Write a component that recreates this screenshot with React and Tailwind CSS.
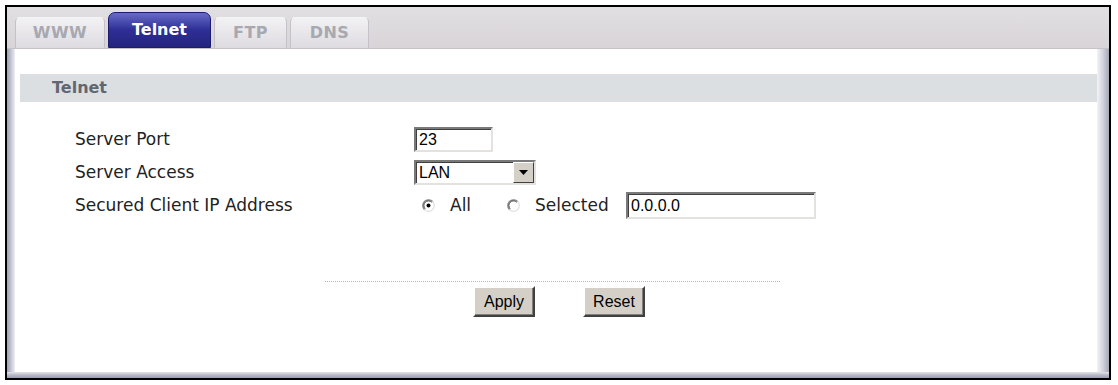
import React from "react";

const Tab = ({ label, active, w }) =>
  active ? (
    <div
      className={`h-[36px] rounded-t-[7px] border border-[#1c1c6e] bg-gradient-to-b from-[#6a6ac8] via-[#2e2e96] to-[#24247e] flex items-center justify-center text-white font-bold text-[16px] ${w}`}
      style={{ fontFamily: '"DejaVu Sans", Verdana, sans-serif' }}
    >
      {label}
    </div>
  ) : (
    <div
      className={`h-[31px] rounded-t-[5px] border border-b-0 border-[#c4c2c8] border-t-[#f4f4f6] bg-gradient-to-b from-[#f2f1f3] to-[#dddbe0] flex items-center justify-center text-[#a8a8b0] font-bold text-[16px] tracking-[0.5px] ${w}`}
      style={{ fontFamily: '"DejaVu Sans", Verdana, sans-serif' }}
    >
      {label}
    </div>
  );

const Radio = ({ checked }) => (
  <svg width="13" height="13" viewBox="0 0 13 13" className="shrink-0">
    <circle cx="6.5" cy="6.5" r="5.8" fill="#ffffff" stroke="#e0e0e0" strokeWidth="1.2" />
    <path d="M2.4 10.6 A5.8 5.8 0 0 1 10.6 2.4" fill="none" stroke="#8a8a8a" strokeWidth="1.3" />
    <path d="M3.2 9.8 A4.6 4.6 0 0 1 9.8 3.2" fill="none" stroke="#404040" strokeWidth="1" />
    {checked && <circle cx="6.5" cy="6.5" r="2" fill="#000000" />}
  </svg>
);

const inputCls =
  "bg-white border-2 border-t-[#7a7a7a] border-l-[#7a7a7a] border-b-[#e4e2de] border-r-[#e4e2de] shadow-[inset_1px_1px_0_#404040] text-[16px] text-black flex items-center pl-[3px]";

const arial = { fontFamily: '"Liberation Sans", Arial, sans-serif' };
const label = { fontFamily: '"DejaVu Sans", Verdana, sans-serif' };

const Button = ({ children, w }) => (
  <div
    className={`h-[31px] ${w} bg-[#d4d0c8] border-2 border-t-[#ffffff] border-l-[#ffffff] border-b-[#404040] border-r-[#404040] shadow-[inset_-1px_-1px_0_#808080] flex items-center justify-center text-[16px] text-black`}
    style={arial}
  >
    {children}
  </div>
);

export default function App() {
  return (
    <div className="w-[1118px] h-[385px] bg-white pt-[5px] pl-[5px]">
      <div className="w-[1106px] h-[375px] border-2 border-black flex flex-col">
        {/* tab strip */}
        <div className="h-[42px] shrink-0 bg-gradient-to-b from-[#e2dfe2] to-[#d8d4d8] border-b border-[#c6c2c6] flex items-end pl-[8px] gap-[3px]">
          <Tab label="WWW" w="w-[90px]" />
          <Tab label="Telnet" active w="w-[103px]" />
          <Tab label="FTP" w="w-[73px]" />
          <Tab label="DNS" w="w-[79px]" />
        </div>
        {/* body */}
        <div className="flex-1 flex flex-col">
          <div className="flex-1 flex">
            <div className="w-[8px] bg-gradient-to-r from-[#9ea2b4] via-[#c4c6d2] to-[#eeeef2]" />
            <div className="flex-1 bg-white flex flex-col pt-[25px]">
              <div
                className="ml-[5px] h-[28px] bg-[#dcdfe2] flex items-center pl-[32px] text-[16px] font-bold text-[#62666f]"
                style={label}
              >
                Telnet
              </div>
              <div className="mt-[21px] pl-[60px] flex flex-col text-[17px] text-[#222222]" style={label}>
                <div className="h-[33px] flex items-center">
                  <div className="w-[339px]">Server Port</div>
                  <div className={`${inputCls} w-[79px] h-[25px]`} style={arial}>
                    23
                  </div>
                </div>
                <div className="h-[33px] flex items-center">
                  <div className="w-[339px]">Server Access</div>
                  <div className={`${inputCls} w-[122px] h-[25px] justify-between pr-0`} style={arial}>
                    <span>LAN</span>
                    <div className="w-[21px] h-[21px] bg-[#d4d0c8] border border-t-[#ffffff] border-l-[#ffffff] border-b-[#404040] border-r-[#404040] flex items-center justify-center">
                      <svg width="9" height="5" viewBox="0 0 9 5">
                        <path d="M0 0 H9 L4.5 5 Z" fill="#000" />
                      </svg>
                    </div>
                  </div>
                </div>
                <div className="h-[33px] flex items-center">
                  <div className="w-[347px]">Secured Client IP Address</div>
                  <Radio checked />
                  <span className="ml-[15px] w-[57px]">All</span>
                  <Radio />
                  <span className="ml-[15px] w-[91px]">Selected</span>
                  <div className={`${inputCls} w-[190px] h-[27px]`} style={arial}>
                    0.0.0.0
                  </div>
                </div>
              </div>
              <div className="mt-[59px] ml-[310px] w-[455px] border-t border-dotted border-[#b4b4b4]" />
              <div className="mt-[4px] ml-[458px] flex gap-[48px]">
                <Button w="w-[62px]">Apply</Button>
                <Button w="w-[62px]">Reset</Button>
              </div>
            </div>
            <div className="w-[12px] bg-gradient-to-r from-[#f4f4f6] via-[#d0d2dc] to-[#a4a8b8]" />
          </div>
          <div className="h-[6px] bg-gradient-to-b from-[#e4e4ea] via-[#b8bac8] to-[#9a9eb0]" />
        </div>
      </div>
    </div>
  );
}
